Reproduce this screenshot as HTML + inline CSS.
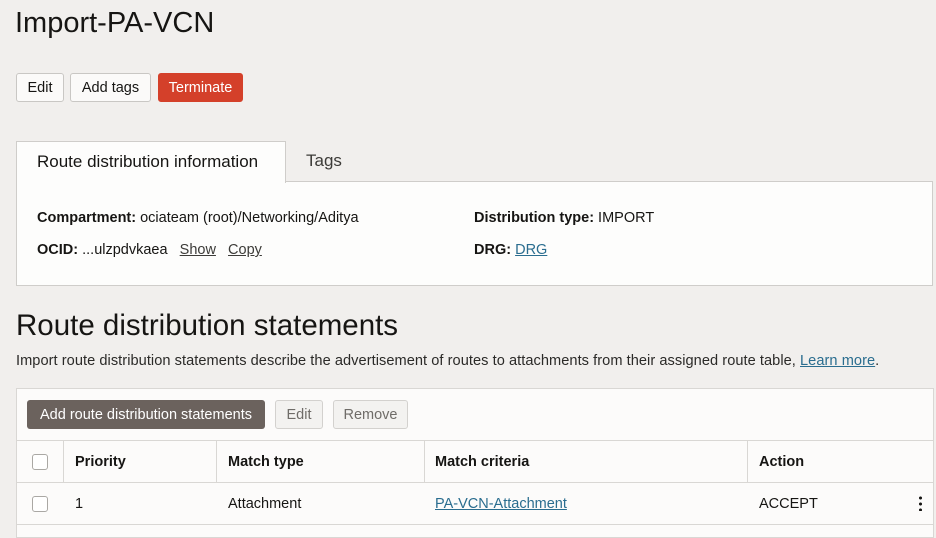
<!DOCTYPE html>
<html><head><style>
*{box-sizing:border-box;margin:0;padding:0}
body{width:936px;height:530px;overflow:hidden;background:#f1efed;font-family:"Liberation Sans",sans-serif;color:#161513;position:relative}
.a{position:absolute;white-space:nowrap;line-height:1.15}
.btn{position:absolute;top:73px;height:29px;border:1px solid #c9c7c4;border-radius:3px;background:#fbfaf9;font-size:14.5px;line-height:28px;text-align:center}
a{color:#2a6d8f;text-decoration:underline}
.u{text-decoration:underline;color:#3c3b38}
.th{position:absolute;font-size:14.5px;font-weight:bold;top:454px;line-height:17px}
.td{position:absolute;font-size:14.5px;top:496px;line-height:17px}
.cb{position:absolute;left:32px;width:16px;height:16px;border:1px solid #aaa8a4;border-radius:3px;background:#fff}
.vl{position:absolute;top:440px;height:42px;width:1px;background:#d9d7d4}
</style></head><body>
<div class="a" style="left:15px;top:7px;font-size:29px">Import-PA-VCN</div>
<div class="btn" style="left:16px;width:48px">Edit</div>
<div class="btn" style="left:70px;width:81px">Add tags</div>
<div class="btn" style="left:158px;width:85px;background:#d4402a;border-color:#d4402a;color:#fff">Terminate</div>

<div class="a" style="left:16px;top:181px;width:917px;height:105px;background:#fdfdfc;border:1px solid #cfcdca"></div>
<div class="a" style="left:16px;top:141px;width:270px;height:42px;background:#fdfdfc;border:1px solid #cfcdca;border-bottom:none"></div>
<div class="a" style="left:37px;top:152px;font-size:17px">Route distribution information</div>
<div class="a" style="left:306px;top:151px;font-size:17px;color:#3c3b38">Tags</div>
<div class="a" style="left:37px;top:210px;font-size:14.5px"><b>Compartment:</b> ociateam (root)/Networking/Aditya</div>
<div class="a" style="left:37px;top:242px;font-size:14.5px"><b>OCID:</b> ...ulzpdvkaea&nbsp;&nbsp; <span class="u">Show</span>&nbsp;&nbsp; <span class="u">Copy</span></div>
<div class="a" style="left:474px;top:210px;font-size:14.5px"><b>Distribution type:</b> IMPORT</div>
<div class="a" style="left:474px;top:242px;font-size:14.5px"><b>DRG:</b> <a>DRG</a></div>

<div class="a" style="left:16px;top:309px;font-size:29.5px">Route distribution statements</div>
<div class="a" style="left:16px;top:353px;font-size:14.6px;color:#2b2a28;letter-spacing:0.05px">Import route distribution statements describe the advertisement of routes to attachments from their assigned route table, <a>Learn more</a>.</div>

<div class="a" style="left:16px;top:388px;width:918px;height:150px;background:#fcfbfa;border:1px solid #d9d7d4"></div>
<div class="a" style="left:27px;top:400px;width:238px;height:29px;background:#6b625d;border-radius:3px;color:#fff;font-size:14.5px;line-height:30px;text-align:center">Add route distribution statements</div>
<div class="a" style="left:275px;top:400px;width:48px;height:29px;border:1px solid #d3d1ce;border-radius:3px;background:#f3f2f0;color:#6f6c68;font-size:14.5px;line-height:28px;text-align:center">Edit</div>
<div class="a" style="left:333px;top:400px;width:75px;height:29px;border:1px solid #d3d1ce;border-radius:3px;background:#f3f2f0;color:#6f6c68;font-size:14.5px;line-height:28px;text-align:center">Remove</div>
<div class="a" style="left:17px;top:440px;width:916px;height:1px;background:#d9d7d4"></div>
<div class="a" style="left:17px;top:482px;width:916px;height:1px;background:#d9d7d4"></div>
<div class="a" style="left:17px;top:524px;width:916px;height:1px;background:#d9d7d4"></div>
<div class="vl" style="left:63px"></div><div class="vl" style="left:216px"></div><div class="vl" style="left:424px"></div><div class="vl" style="left:747px"></div>
<div class="cb" style="top:454px"></div><div class="cb" style="top:496px"></div>
<div class="th" style="left:75px">Priority</div>
<div class="th" style="left:228px">Match type</div>
<div class="th" style="left:435px">Match criteria</div>
<div class="th" style="left:759px">Action</div>
<div class="td" style="left:75px">1</div>
<div class="td" style="left:228px">Attachment</div>
<div class="td" style="left:435px"><a>PA-VCN-Attachment</a></div>
<div class="td" style="left:759px">ACCEPT</div>
<div class="a" style="left:919px;top:495px;width:3px;height:16px;background:radial-gradient(circle,#161513 1.4px,transparent 1.6px) 0 0/3px 6px"></div>
</body></html>
